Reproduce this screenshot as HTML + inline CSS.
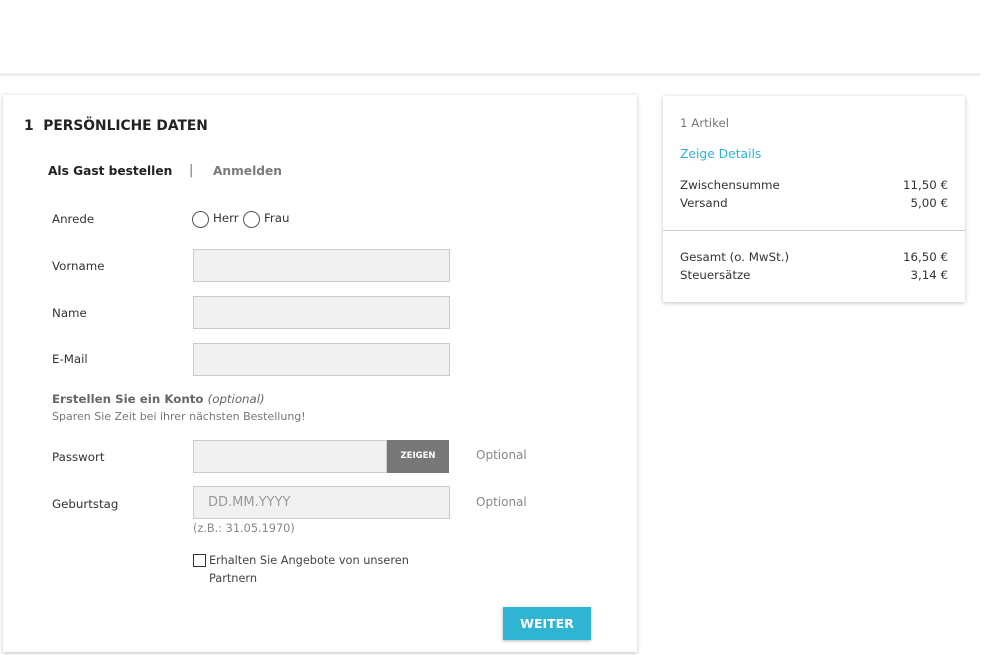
<!DOCTYPE html>
<html><head><meta charset="utf-8"><style>
*{margin:0;padding:0;box-sizing:border-box}
body{width:1000px;height:655px;background:#fff;font-family:"DejaVu Sans","Liberation Sans",sans-serif;color:#333;position:relative;overflow:hidden;font-size:11.5px}
.abs{position:absolute}
.hdr{left:0;top:73px;width:980px;height:3px;background:#eee}
.card{background:#fff;box-shadow:0 1px 4px rgba(0,0,0,.25)}
.lbl{left:52px;font-size:11.8px;color:#333}
.inp{left:193px;width:257px;height:33px;background:#f1f1f1;border:1px solid #ccc}
.opt{left:476px;color:#888;font-size:12px}
.row{left:680px;width:268px;display:flex;justify-content:space-between;font-size:11.8px}
</style></head><body>
<div class="abs hdr"></div>
<div class="abs card" style="left:3px;top:95px;width:634px;height:557px"></div>
<div class="abs" style="left:24px;top:118px;font-weight:bold;font-size:13.8px;color:#222">1&nbsp;&nbsp;PERSÖNLICHE DATEN</div>
<div class="abs" style="left:48px;top:164px;font-weight:bold;font-size:12.2px;color:#222">Als Gast bestellen</div>
<div class="abs" style="left:189px;top:163px;font-size:13px;color:#777">|</div>
<div class="abs" style="left:213px;top:164px;font-weight:bold;font-size:12.2px;color:#7a7a7a">Anmelden</div>
<div class="abs lbl" style="top:212px">Anrede</div>
<div class="abs" style="left:192px;top:211px;width:17px;height:17px;border:1.5px solid #555;border-radius:50%"></div>
<div class="abs" style="left:213px;top:211px;font-size:11.8px">Herr</div>
<div class="abs" style="left:243px;top:211px;width:17px;height:17px;border:1.5px solid #555;border-radius:50%"></div>
<div class="abs" style="left:264px;top:211px;font-size:11.8px">Frau</div>
<div class="abs lbl" style="top:259px">Vorname</div>
<div class="abs inp" style="top:249px"></div>
<div class="abs lbl" style="top:306px">Name</div>
<div class="abs inp" style="top:296px"></div>
<div class="abs lbl" style="top:352px">E-Mail</div>
<div class="abs inp" style="top:343px"></div>
<div class="abs" style="left:52px;top:392px;font-weight:bold;color:#666;font-size:11.8px">Erstellen Sie ein Konto <i style="font-weight:normal">(optional)</i></div>
<div class="abs" style="left:52px;top:410px;color:#777;font-size:11px">Sparen Sie Zeit bei ihrer nächsten Bestellung!</div>
<div class="abs lbl" style="top:450px">Passwort</div>
<div class="abs inp" style="top:440px;width:194px"></div>
<div class="abs" style="left:387px;top:440px;width:62px;height:33px;background:#777;color:#fff;font-size:8.5px;font-weight:bold;text-align:center;line-height:33px">ZEIGEN</div>
<div class="abs opt" style="top:448px">Optional</div>
<div class="abs lbl" style="top:497px">Geburtstag</div>
<div class="abs inp" style="top:486px;padding-left:14px;line-height:31px;color:#999;font-size:13px">DD.MM.YYYY</div>
<div class="abs opt" style="top:495px">Optional</div>
<div class="abs" style="left:193px;top:522px;color:#888;font-size:11.3px">(z.B.: 31.05.1970)</div>
<div class="abs" style="left:193px;top:554px;width:13px;height:13px;border:1.5px solid #333"></div>
<div class="abs" style="left:209px;top:552px;line-height:18px;color:#444;font-size:11.3px">Erhalten Sie Angebote von unseren<br>Partnern</div>
<div class="abs" style="left:503px;top:607px;width:88px;height:33px;background:#2fb5d2;color:#fff;font-weight:bold;font-size:12.5px;text-align:center;line-height:33px;box-shadow:0 1px 3px rgba(0,0,0,.3)">WEITER</div>
<div class="abs card" style="left:663px;top:96px;width:302px;height:206px"></div>
<div class="abs" style="left:680px;top:116px;color:#777;font-size:11.8px">1 Artikel</div>
<div class="abs" style="left:680px;top:147px;color:#2fb5d2;font-size:12.3px">Zeige Details</div>
<div class="abs row" style="top:178px"><span>Zwischensumme</span><span>11,50 €</span></div>
<div class="abs row" style="top:196px"><span>Versand</span><span>5,00 €</span></div>
<div class="abs" style="left:663px;top:230px;width:302px;height:1px;background:#ccc"></div>
<div class="abs row" style="top:250px"><span>Gesamt (o. MwSt.)</span><span>16,50 €</span></div>
<div class="abs row" style="top:268px"><span>Steuersätze</span><span>3,14 €</span></div>
</body></html>
